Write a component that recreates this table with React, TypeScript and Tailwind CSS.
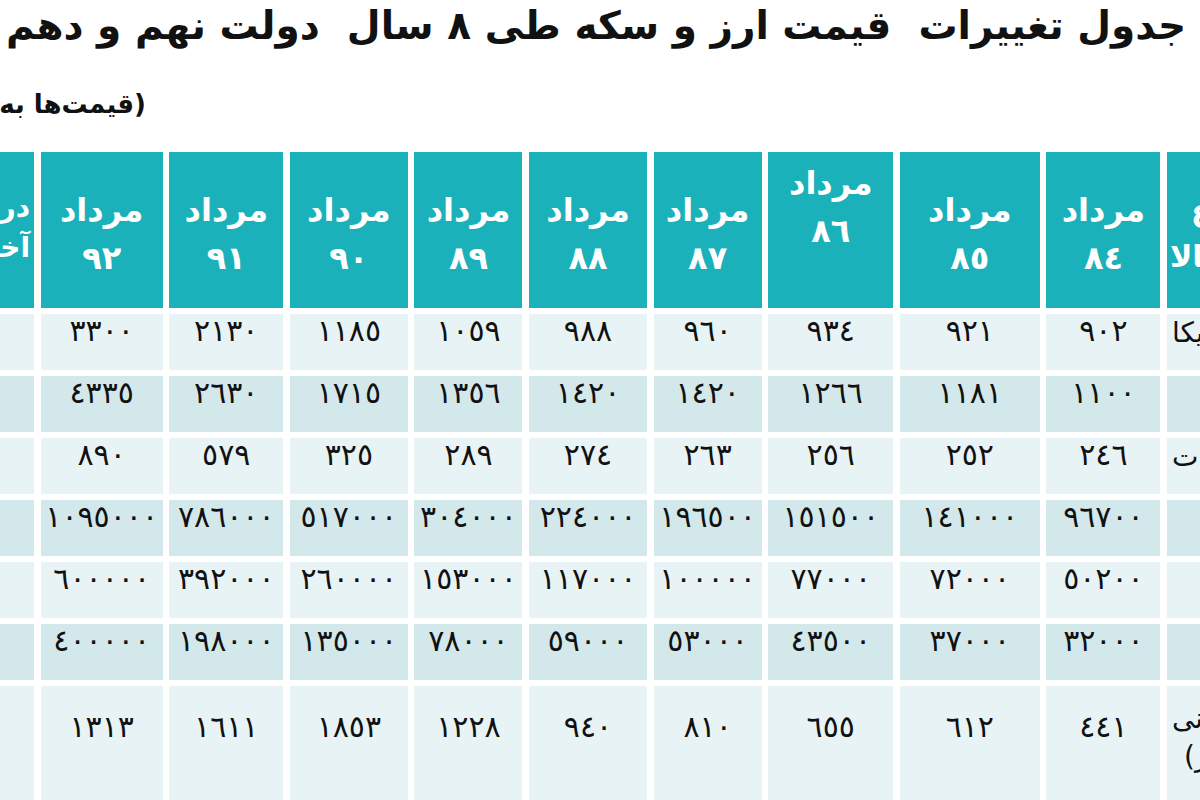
import React from 'react';

const toFa = (s: string) => s.replace(/[0-9]/g, (d) => '٠١٢٣٤٥٦٧٨٩'[Number(d)]);

const years = ['84', '85', '86', '87', '88', '89', '90', '91', '92'];

const rows: string[][] = [
  ['902', '921', '934', '960', '988', '1059', '1185', '2130', '3300'],
  ['1100', '1181', '1266', '1420', '1420', '1356', '1715', '2630', '4335'],
  ['246', '252', '256', '263', '274', '289', '325', '579', '890'],
  ['96700', '141000', '151500', '196500', '224000', '304000', '517000', '786000', '1095000'],
  ['50200', '72000', '77000', '100000', '117000', '153000', '260000', '392000', '600000'],
  ['32000', '37000', '43500', '53000', '59000', '78000', '135000', '198000', '400000'],
  ['441', '612', '655', '810', '940', '1228', '1853', '1611', '1313'],
];

const labels = ['دلار آمریکا', 'یورو', 'درهم امارات', 'سکه تمام', 'نیم سکه', 'ربع سکه', 'انس طلای جهانی'];

const font = { fontFamily: '"DejaVu Sans", "Liberation Sans", sans-serif' };

export default function App() {
  return (
    <div className="w-[1200px] h-[800px] overflow-hidden bg-white text-black" style={font}>
      <div dir="rtl" className="h-[60px] pr-[14px] text-right whitespace-pre text-[39px] leading-[52px] font-bold text-[#111]">
        {'جدول تغییرات  قیمت ارز و سکه طی ' + toFa('8') + ' سال  دولت نهم و دهم'}
      </div>
      <div dir="ltr" className="h-[92px] flex items-start pt-[24px]">
        <div dir="rtl" className="w-[146px] overflow-hidden whitespace-nowrap text-right text-[26px] leading-[40px] font-bold text-[#111]">
          (قیمت‌ها به تومان است)
        </div>
      </div>
      <div
        dir="rtl"
        className="grid grid-cols-[33px_114px_140px_125px_108px_118px_108px_118px_114px_122px_34px] grid-rows-[156px_56px_56px_56px_56px_56px_56px_130px] gap-x-[6.6px] gap-y-[6px]"
      >
        {/* header row */}
        <div dir="ltr" className="bg-[#1bb1ba] overflow-hidden flex justify-start">
          <div dir="rtl" className="w-[160px] shrink-0 flex flex-col items-end pt-[36px] text-white font-bold text-[30px] leading-[46px] whitespace-nowrap">
            <span className="pl-[24px]">نوع</span>
            <span className="pl-[3px]">کالا</span>
          </div>
        </div>
        {years.map((y) => (
          <div
            key={y}
            className={
              'bg-[#1bb1ba] text-white font-bold flex flex-col items-center text-[32px] leading-[48px] ' +
              (y === '86' ? 'pt-[7px]' : 'pt-[34px]')
            }
          >
            <span>مرداد</span>
            <span>{toFa(y)}</span>
          </div>
        ))}
        <div dir="ltr" className="bg-[#1bb1ba] overflow-hidden flex justify-end">
          <div dir="rtl" className="w-[140px] shrink-0 flex flex-col items-start pr-[4px] pt-[36px] text-white font-bold text-[28px] leading-[40px] whitespace-nowrap">
            <span>درصد</span>
            <span>آخرین</span>
          </div>
        </div>

        {rows.map((r, i) => {
          const bg = i % 2 === 1 ? 'bg-[#d3e8eb]' : 'bg-[#e8f3f5]';
          const last = i === 6;
          const txt = last ? 'pt-[24px]' : 'pt-0';
          const visibleLabel = i === 0 || i === 2 || i === 6;
          return (
            <React.Fragment key={i}>
              <div dir="ltr" className={bg + ' overflow-hidden flex justify-start'}>
                <div
                  dir="rtl"
                  className={
                    'w-[220px] shrink-0 flex flex-col whitespace-nowrap text-[28px] leading-[38px] text-[#111] ' +
                    (visibleLabel ? 'items-end ' : 'items-center ') +
                    (last ? 'pt-[14px]' : 'pt-0')
                  }
                >
                  <span className={visibleLabel ? 'pl-[5px]' : ''}>{labels[i]}</span>
                  {last && <span className="pl-[17px]">(دلار)</span>}
                </div>
              </div>
              {r.map((v, j) => (
                <div key={j} className={bg + ' flex justify-center text-[30px] leading-[34px] text-[#111] whitespace-nowrap ' + txt}>
                  {toFa(v)}
                </div>
              ))}
              <div className={bg}></div>
            </React.Fragment>
          );
        })}
      </div>
    </div>
  );
}
